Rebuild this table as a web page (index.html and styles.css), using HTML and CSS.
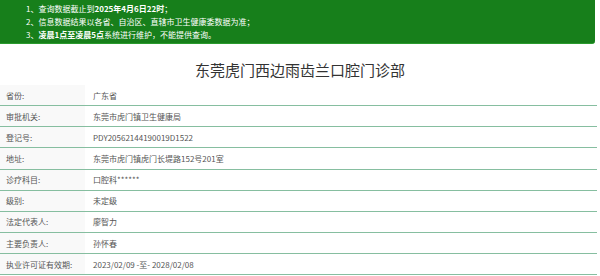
FILE: index.html
```html
<!DOCTYPE html>
<html lang="zh-CN">
<head>
<meta charset="utf-8">
<title>东莞虎门西边雨齿兰口腔门诊部</title>
<link rel="stylesheet" href="styles.css">
</head>
<body>
<div class="notice">
  <p>1、查询数据截止到<b>2025年4月6日22时</b>；</p>
  <p>2、信息数据结果以各省、自治区、直辖市卫生健康委数据为准；</p>
  <p>3、<b>凌晨1点至凌晨5点</b>系统进行维护，不能提供查询。</p>
</div>
<h1 class="title">东莞虎门西边雨齿兰口腔门诊部</h1>
<div class="info">
  <div class="row"><div class="label">省份:</div><div class="value">广东省</div></div>
  <div class="row"><div class="label">审批机关:</div><div class="value">东莞市虎门镇卫生健康局</div></div>
  <div class="row"><div class="label">登记号:</div><div class="value">PDY20562144190019D1522</div></div>
  <div class="row"><div class="label">地址:</div><div class="value">东莞市虎门镇虎门长堤路152号201室</div></div>
  <div class="row"><div class="label">诊疗科目:</div><div class="value">口腔科******</div></div>
  <div class="row"><div class="label">级别:</div><div class="value">未定级</div></div>
  <div class="row"><div class="label">法定代表人:</div><div class="value">廖智力</div></div>
  <div class="row"><div class="label">主要负责人:</div><div class="value">孙怀春</div></div>
  <div class="row"><div class="label">执业许可证有效期:</div><div class="value">2023/02/09 -至- 2028/02/08</div></div>
</div>
</body>
</html>
```

FILE: styles.css
```css
html, body {
  margin: 0;
  padding: 0;
  background: #ffffff;
}
body {
  font-family: "Noto Sans CJK SC", "Noto Sans", sans-serif;
  width: 600px;
  overflow: hidden;
}
.notice {
  width: 595px;
  height: 44px;
  box-sizing: border-box;
  padding: 1.5px 0 0 26px;
  background: #177f1b;
  border-bottom: 1px solid #2a9a2e;
  border-bottom-right-radius: 3px;
  color: #ffffff;
  font-size: 8px;
}
.notice p {
  margin: 0;
  line-height: 13px;
  white-space: nowrap;
}
.notice b {
  font-weight: 700;
}
.title {
  margin: 15px 0 5px;
  text-align: center;
  font-size: 15px;
  line-height: 21px;
  font-weight: 400;
  color: #333333;
}
.info {
  width: 597px;
}
.row {
  display: grid;
  grid-template-columns: 85px 1fr;
  height: 21.15px;
  box-sizing: border-box;
  border-bottom: 1px solid #86bea0;
  font-size: 8px;
  color: #555555;
}
.label {
  background: #f9f9f9;
  padding-left: 6px;
  display: flex;
  align-items: center;
  white-space: nowrap;
}
.value {
  padding-left: 8px;
  display: flex;
  align-items: center;
  white-space: nowrap;
}
```
